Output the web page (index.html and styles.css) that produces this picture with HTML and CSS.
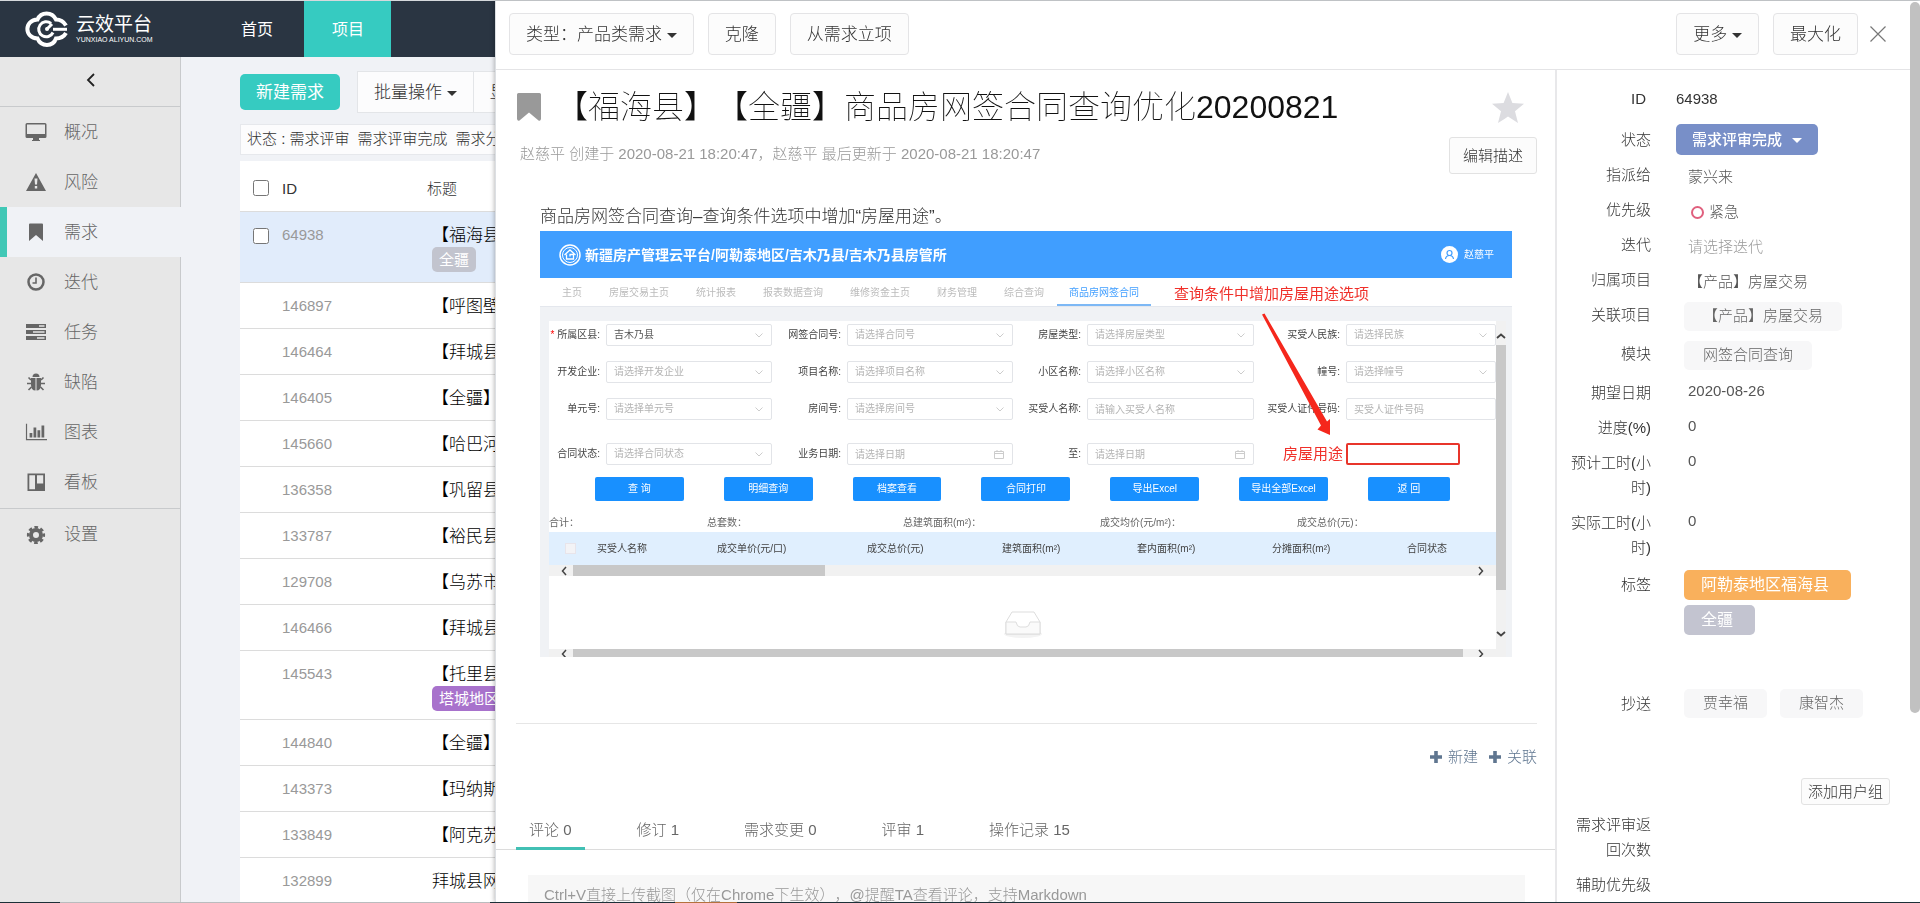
FILE: index.html
```html
<!DOCTYPE html>
<html lang="zh-CN">
<head>
<meta charset="utf-8">
<title>云效平台</title>
<link rel="stylesheet" href="styles.css">
</head>
<body>
<header class="topbar">
  <a class="logo" href="#">
    <svg class="logo-mark" viewBox="0 0 44 36" fill="none" stroke="#fff" stroke-width="4">
      <path d="M41 14.5C38 9.500 34 8.500 31 8.500C27 .5 16 .5 12.500 8.500C-1 9-1 27 12.500 27.500C16 36 28 36 31 27.500C36 27.500 39 25.500 41 22"/>
      <path d="M26 12.500A7.500 7.500 0 1 0 28 21.500" stroke-width="3"/>
      <path d="M22 18l5-5" stroke-width="3"/>
      <path d="M28 18.300h14" stroke-width="3"/>
      <circle cx="22" cy="18" r="2" fill="#fff" stroke="none"/>
    </svg>
    <span class="logo-text"><b>云效平台</b><small>YUNXIAO ALIYUN.COM</small></span>
  </a>
  <nav class="topnav"><a href="#">首页</a><a href="#" class="active">项目</a></nav>
</header>
<div class="shell">
  <aside class="sidebar">
    <button class="collapse" aria-label="收起"><svg width="10" height="14" viewBox="0 0 10 14" fill="none" stroke="#222" stroke-width="1.800"><path d="M8 1L2 7l6 6"/></svg></button>
    <a href="#"><svg viewBox="0 0 22 20"><path fill-rule="evenodd" d="M2 1h18a1.500 1.500 0 0 1 1.500 1.500v12A1.500 1.500 0 0 1 20 16h-6v2h1v1H7v-1h1v-2H2a1.500 1.500 0 0 1-1.500-1.500v-12A1.500 1.500 0 0 1 2 1zm0 1.500V12h18V2.500z"/></svg>概况</a>
    <a href="#"><svg viewBox="0 0 22 20"><path fill-rule="evenodd" d="M11 1l10 18H1zM9.500 6.500l.5 6h2l.5-6zM9.800 14v2.500h2.400V14z"/></svg>风险</a>
    <a href="#" class="active"><svg viewBox="0 0 22 20"><path d="M5 1.500h12q1 0 1 1V19l-7-6-7 6V2.500q0-1 1-1z"/></svg>需求</a>
    <a href="#"><svg viewBox="0 0 22 20" ><circle cx="11" cy="10" r="7.500" fill="none" stroke="#666" stroke-width="2.500"/><path d="M11 5.500V11H7.500" fill="none" stroke="#666" stroke-width="1.600"/></svg>迭代</a>
    <a href="#"><svg viewBox="0 0 22 20"><path fill-rule="evenodd" d="M1 2h20v4H1zm13 1.300v1.400h5.500V3.300zM1 8h20v4H1zm7 1.300v1.400h11.500V9.300zM1 14h20v4H1zm11 1.300v1.400h7.500v-1.400z"/></svg>任务</a>
    <a href="#"><svg viewBox="0 0 22 20"><path d="M7.500 5a3.500 3.500 0 0 1 7 0zM6 6h4.500v12.500C7.500 18.500 6 16.500 6 13zM16 6h-4.500v12.500c3 0 4.500-2 4.500-5.500z"/><path d="M6 8L3.500 5.500M6 11.500H2M6.500 15L3.500 18M16 8l2.500-2.500M16 11.500h4M15.500 15l3 3" fill="none" stroke="#666" stroke-width="1.600"/></svg>缺陷</a>
    <a href="#"><svg viewBox="0 0 24 20"><path d="M1 1h1.300v16.700H24V19H1zM5 11h3v5H5zM9.300 5h3v11h-3zM13.600 8h3v8h-3zM18 3h3v13h-3z"/></svg>图表</a>
    <a href="#"><svg viewBox="0 0 22 20"><path fill-rule="evenodd" d="M2.500 1.500h17.500v17.500H2.500zM4.300 3.300v14h5.700v-14zM12 3.300v8.200h6.200V3.300z"/></svg>看板</a>
    <a href="#" class="settings"><svg viewBox="0 0 22 20"><circle cx="11" cy="10" r="5" fill="none" stroke="#666" stroke-width="4"/><circle cx="11" cy="10" r="7.800" fill="none" stroke="#666" stroke-width="2.600" stroke-dasharray="3.600 2.526" stroke-dashoffset="1.800"/></svg>设置</a>
  </aside>
  <main class="list">
    <div class="list-tools">
      <button class="create">新建需求</button>
      <div class="group"><button>批量操作 <i class="caret"></i></button><button>显示设置</button></div>
    </div>
    <div class="filter"><span>状态 : 需求评审</span><span>需求评审完成</span><span>需求分析</span></div>
    <table class="reqs">
      <colgroup><col class="c-check"><col class="c-id"><col></colgroup>
      <thead><tr><th><input type="checkbox" aria-label="全选"></th><th>ID</th><th>标题</th></tr></thead>
      <tbody>
        <tr class="current"><td><input type="checkbox" aria-label="选择 64938"></td><td>64938</td><td>【福海县】<br><span class="label grey">全疆</span></td></tr>
        <tr><td></td><td>146897</td><td>【呼图壁县】</td></tr>
        <tr><td></td><td>146464</td><td>【拜城县】</td></tr>
        <tr><td></td><td>146405</td><td>【全疆】</td></tr>
        <tr><td></td><td>145660</td><td>【哈巴河县】</td></tr>
        <tr><td></td><td>136358</td><td>【巩留县】</td></tr>
        <tr><td></td><td>133787</td><td>【裕民县】</td></tr>
        <tr><td></td><td>129708</td><td>【乌苏市】</td></tr>
        <tr><td></td><td>146466</td><td>【拜城县】</td></tr>
        <tr><td></td><td>145543</td><td>【托里县】<br><span class="label purple">塔城地区</span></td></tr>
        <tr><td></td><td>144840</td><td>【全疆】</td></tr>
        <tr><td></td><td>143373</td><td>【玛纳斯县】</td></tr>
        <tr><td></td><td>133849</td><td>【阿克苏】</td></tr>
        <tr><td></td><td>132899</td><td>拜城县网签</td></tr>
      </tbody>
    </table>
  </main>
</div>

<section class="drawer">
  <div class="drawer-bar">
    <button>类型：产品类需求 <i class="caret"></i></button>
    <button>克隆</button>
    <button>从需求立项</button>
    <span class="spacer"></span>
    <button>更多 <i class="caret"></i></button>
    <button>最大化</button>
    <button class="close" aria-label="关闭"><svg width="16" height="16" viewBox="0 0 16 16" stroke="#777" stroke-width="1.200"><path d="M.5.5l15 15M15.500.5l-15 15"/></svg></button>
  </div>
  <div class="drawer-body">
    <div class="detail">
      <div class="title-row">
        <svg width="24" height="28" viewBox="0 0 24 28" fill="#999"><path d="M1.500 0h21Q24 0 24 1.500V26q-.5 2.500-2.500 1.500L12 19.500l-9.500 8Q.5 28.500 0 26V1.500Q0 0 1.500 0z"/></svg>
        <h1>【福海县】【全疆】商品房网签合同查询优化20200821</h1>
        <svg class="star" width="32" height="31" viewBox="0 0 32 31" fill="#dcdce0"><path d="M16 0l4.400 11 11.600.8-9 7.400 3 11.800-10-6.400L6 31l3-11.800-9-7.400 11.600-.8z"/></svg>
      </div>
      <div class="meta-row">
        <p>赵慈平 创建于 2020-08-21 18:20:47，赵慈平 最后更新于 2020-08-21 18:20:47</p>
        <button class="small-btn edit">编辑描述</button>
      </div>
      <div class="desc">
        <p>商品房网签合同查询–查询条件选项中增加“房屋用途”。</p>
        <figure class="shot">
          <div class="s-head">
            <svg width="22" height="22" viewBox="0 0 22 22" fill="none" stroke="#fff"><circle cx="11" cy="11" r="10" stroke-width="1.500"/><circle cx="11" cy="11" r="7.500"/><path d="M5.500 11L11 6l5.500 5M7.500 10.500V15h7v-4.500H11v2" stroke-width="1.300"/></svg>
            <strong>新疆房产管理云平台/阿勒泰地区/吉木乃县/吉木乃县房管所</strong>
            <svg width="17" height="17" viewBox="0 0 17 17"><circle cx="8.500" cy="8.500" r="8.500" fill="#fff"/><g fill="none" stroke="#409eff" stroke-width="1.200"><circle cx="8.500" cy="7" r="2.500"/><path d="M4.500 13q.5-3.500 4-3.500t4 3.500"/></g></svg>
            <span>赵慈平</span>
          </div>
          <div class="s-tabs"><span>主页</span><span>房屋交易主页</span><span>统计报表</span><span>报表数据查询</span><span>维修资金主页</span><span>财务管理</span><span>综合查询</span><span class="on">商品房网签合同</span><em>查询条件中增加房屋用途选项</em></div>
          <div class="s-body">
            <div class="s-panel">
              <div class="s-form">
                <label for="f1"><i>*</i> 所属区县:</label><select id="f1" class="filled"><option>吉木乃县</option></select>
                <label for="f2">网签合同号:</label><select id="f2"><option>请选择合同号</option></select>
                <label for="f3">房屋类型:</label><select id="f3"><option>请选择房屋类型</option></select>
                <label for="f4">买受人民族:</label><select id="f4"><option>请选择民族</option></select>
                <label for="f5">开发企业:</label><select id="f5"><option>请选择开发企业</option></select>
                <label for="f6">项目名称:</label><select id="f6"><option>请选择项目名称</option></select>
                <label for="f7">小区名称:</label><select id="f7"><option>请选择小区名称</option></select>
                <label for="f8">幢号:</label><select id="f8"><option>请选择幢号</option></select>
                <label for="f9">单元号:</label><select id="f9"><option>请选择单元号</option></select>
                <label for="f10">房间号:</label><select id="f10"><option>请选择房间号</option></select>
                <label for="f11">买受人名称:</label><input id="f11" placeholder="请输入买受人名称">
                <label for="f12">买受人证件号码:</label><input id="f12" placeholder="买受人证件号码">
                <label for="f13">合同状态:</label><select id="f13"><option>请选择合同状态</option></select>
                <label for="f14">业务日期:</label><input id="f14" class="date" placeholder="请选择日期">
                <label for="f15">至:</label><input id="f15" class="date" placeholder="请选择日期">
                <label for="f16" class="red">房屋用途</label><input id="f16" class="red">
              </div>
              <div class="s-btns"><button>查 询</button><button>明细查询</button><button>档案查看</button><button>合同打印</button><button>导出Excel</button><button>导出全部Excel</button><button>返 回</button></div>
              <div class="s-sum"><span>合计：</span><span>总套数：</span><span>总建筑面积(m²)：</span><span>成交均价(元/m²)：</span><span>成交总价(元)：</span></div>
              <table class="s-table">
                <colgroup><col class="w-check"><col class="w-name"><col class="w-unit"><col class="w-area"><col class="w-area"><col class="w-area"><col class="w-area"><col></colgroup>
                <tr><th><input type="checkbox" aria-label="全选合同"></th><th>买受人名称</th><th>成交单价(元/口)</th><th>成交总价(元)</th><th>建筑面积(m²)</th><th>套内面积(m²)</th><th>分摊面积(m²)</th><th>合同状态</th></tr>
              </table>
              <div class="s-hbar"><svg viewBox="0 0 6 10"><path d="M5 1L1.500 5 5 9"/></svg><div class="track"><div class="thumb short"></div></div><svg viewBox="0 0 6 10"><path d="M1 1l3.500 4L1 9"/></svg></div>
              <div class="s-empty"><svg width="38" height="28" viewBox="0 0 38 28"><ellipse cx="19" cy="24" rx="19" ry="4" fill="#f3f3f3"/><path d="M2 12L8 2h22l6 10v12H2z" fill="#fff" stroke="#ddd"/><path d="M2 12h10q1 5 4 5h6q3 0 4-5h10v12H2z" fill="#fafafa" stroke="#ddd"/></svg></div>
              <div class="s-hbar last"><svg viewBox="0 0 6 10"><path d="M5 1L1.500 5 5 9"/></svg><div class="track"><div class="thumb long"></div></div><svg viewBox="0 0 6 10"><path d="M1 1l3.500 4L1 9"/></svg></div>
            </div>
            <div class="s-vbar"><svg viewBox="0 0 10 6"><path d="M1 5l4-3.500L9 5"/></svg><div class="v-thumb"></div><svg viewBox="0 0 10 6"><path d="M1 1l4 3.500L9 1"/></svg></div>
          </div>
          <svg class="arrow" width="972" height="426" viewBox="0 0 972 426"><path d="M722 83.500L724.500 82.500 787 190.500 790 188V204L777.500 198.500 781 194.500z" fill="#f5271c"/></svg>
        </figure>
      </div>
      <div class="links">
        <a href="#"><svg viewBox="0 0 12 12"><path d="M4.200 0h3.600v4.200H12v3.600H7.800V12H4.200V7.800H0V4.200h4.200z"/></svg> 新建</a>
        <a href="#"><svg viewBox="0 0 12 12"><path d="M4.200 0h3.600v4.200H12v3.600H7.800V12H4.200V7.800H0V4.200h4.200z"/></svg>关联</a>
      </div>
      <nav class="tabs"><a href="#" class="active">评论 0</a><a href="#">修订 1</a><a href="#">需求变更 0</a><a href="#">评审 1</a><a href="#">操作记录 15</a></nav>
      <textarea class="comment" aria-label="评论" placeholder="Ctrl+V直接上传截图（仅在Chrome下生效），@提醒TA查看评论，支持Markdown"></textarea>
    </div>
    <aside class="props">
      <div class="field id"><span class="name">ID</span><span class="val">64938</span></div>
      <div class="field state"><span class="name">状态</span><button class="status">需求评审完成 <i class="caret"></i></button></div>
      <div class="field"><span class="name">指派给</span><span class="val in">蒙兴来</span></div>
      <div class="field"><span class="name">优先级</span><span class="val in"><i class="ring"></i>紧急</span></div>
      <div class="field"><span class="name">迭代</span><span class="val in hint">请选择迭代</span></div>
      <div class="field"><span class="name">归属项目</span><span class="val in">【产品】房屋交易</span></div>
      <div class="field"><span class="name">关联项目</span><span class="tags"><span class="chip">【产品】房屋交易</span></span></div>
      <div class="field"><span class="name">模块</span><span class="tags"><span class="chip">网签合同查询</span></span></div>
      <div class="field"><span class="name">期望日期</span><span class="val in num">2020-08-26</span></div>
      <div class="field"><span class="name">进度(%)</span><span class="val in num">0</span></div>
      <div class="field"><span class="name">预计工时(小时)</span><span class="val in num">0</span></div>
      <div class="field"><span class="name">实际工时(小时)</span><span class="val in num">0</span></div>
      <div class="field marks"><span class="name">标签</span><span class="tags"><span class="mark orange">阿勒泰地区福海县</span><span class="mark grey">全疆</span></span></div>
      <div class="field cc"><span class="name">抄送</span><span class="tags"><span class="chip">贾幸福</span><span class="chip">康智杰</span></span></div>
      <button class="small-btn add">添加用户组</button>
      <div class="field"><span class="name">需求评审返回次数</span></div>
      <div class="field"><span class="name">辅助优先级</span></div>
    </aside>
  </div>
  <div class="scrollbar"></div>
</section>
<div class="bottom-line"></div>
</body>
</html>
```

FILE: styles.css
```css
* { box-sizing: border-box; }
body {
  margin: 0;
  height: 100vh;
  overflow: hidden;
  display: flex;
  flex-direction: column;
  border-top: 1px solid #d5d9dc;
  background: #f0f2f6;
  color: #333;
  font: 300 15px/25px "Liberation Sans", "Noto Sans CJK SC", sans-serif;
  text-spacing-trim: space-all;
}
a { color: inherit; text-decoration: none; }
button, input, select, textarea { font: inherit; color: inherit; margin: 0; }
h1, p, figure { margin: 0; }
i, em { font-style: normal; }
.caret {
  display: inline-block;
  border: 5px solid transparent;
  border-top-color: currentColor;
  border-bottom: 0;
  vertical-align: 2px;
}

/* top bar */
.topbar { display: flex; flex: none; height: 56px; background: #2a3542; color: #fff; }
.logo { display: flex; align-items: center; width: 213px; padding-left: 25px; }
.logo-mark { width: 44px; height: 36px; }
.logo-text { display: flex; flex-direction: column; padding-left: 7px; }
.logo-text b { font-size: 19px; line-height: 22px; font-weight: 400; }
.logo-text small { font-size: 7px; line-height: 8px; font-weight: 400; white-space: nowrap; }
.topnav { display: flex; gap: 4px; }
.topnav a { padding: 1px 27px 0 28px; font-size: 16px; line-height: 55px; font-weight: 400; }
.topnav .active { background: #36cbc1; }

/* side bar */
.shell { display: flex; flex: 1; min-height: 0; }
.sidebar {
  display: flex;
  flex-direction: column;
  flex: none;
  width: 181px;
  background: linear-gradient(#c8cacc, #c8cacc) right / 1px 100% no-repeat #e7e7e7;
}
.collapse { flex: none; height: 50px; border: 0; border-bottom: 1px solid #c8cacc; background: none; padding: 0; }
.sidebar a {
  display: flex;
  align-items: center;
  gap: 17px;
  flex: none;
  height: 50px;
  padding-left: 25px;
  font-size: 17px;
  color: #666;
}
.sidebar a svg { width: 22px; height: 20px; fill: #666; }
.sidebar .active { background: #f0f2f6; border-left: 7px solid #41c8b6; padding-left: 18px; }
.sidebar .settings { margin-top: 1px; border-top: 1px solid #c8cacc; height: 52px; }

/* requirement list */
.list { flex: 1; min-width: 0; padding: 14px 0 0 59px; overflow: hidden; }
.list-tools { display: flex; align-items: center; gap: 17px; }
.create { width: 100px; height: 36px; border: 0; border-radius: 5px; background: #36cbc1; color: #fff; font-size: 17px; font-weight: 400; padding: 0; }
.group { display: flex; }
.group button { height: 42px; padding: 0 16px; border: 1px solid #e3e5e8; background: #fcfcfd; font-size: 17px; }
.group button + button { border-left: 0; }
.filter { display: flex; gap: 8px; margin: 11px 0 6px; height: 31px; padding-left: 6px; background: #fcfcfd; border: 1px solid #e6e8ec; line-height: 28px; white-space: nowrap; }
.reqs { width: 100%; table-layout: fixed; border-collapse: collapse; background: #fff; white-space: nowrap; }
.c-check { width: 42px; }
.c-id { width: 145px; }
.reqs th { height: 50px; padding: 5px 0 0; text-align: left; font-weight: 300; }
.reqs td { padding: 10px 0; vertical-align: top; border-top: 1px solid #dcdcdc; color: #999; }
.reqs td:last-child { padding: 13px 0 8px 5px; font-size: 17px; line-height: 22px; color: #000; }
.reqs .current td { background: #e1ecfb; }
.reqs .current td:last-child { padding-bottom: 10px; }
.reqs input { display: block; width: 16px; height: 16px; margin: 0 0 0 13px; }
.reqs td input { margin-top: 6px; }
.label { display: inline-block; height: 25px; padding: 0 7px; border-radius: 5px; color: #fff; font-size: 15px; line-height: 25px; font-weight: 400; }
.label.grey { background: #c2c4ce; }
.label.purple { background: #a872cc; }

/* drawer */
.drawer {
  position: fixed;
  top: 1px;
  right: 0;
  bottom: 1px;
  left: 495px;
  display: flex;
  flex-direction: column;
  background: #fff;
  border-left: 1px solid #dcdfe3;
  box-shadow: -1px 0 4px rgba(0, 0, 0, .25);
}
.drawer-bar { display: flex; align-items: center; gap: 14px; flex: none; height: 69px; padding: 0 34px 2px 13px; border-bottom: 1px solid #e4e4e6; }
.drawer-bar button { height: 42px; padding: 0 16px; border: 1px solid #e4e4e6; border-radius: 4px; background: #fcfcfc; font-size: 17px; white-space: nowrap; }
.drawer-bar .spacer { flex: 1; }
.drawer-bar .close { width: 16px; height: 16px; padding: 0; border: 0; background: none; margin-left: -2px; }
.close svg { display: block; }
.drawer-body { display: flex; flex: 1; min-height: 0; overflow: hidden; }
.detail { flex: 1; min-width: 0; padding-top: 17px; }
.title-row { display: flex; align-items: center; height: 40px; padding: 0 31px 0 21px; }
.title-row h1 { flex: 1; padding-left: 15px; font-size: 32px; line-height: 40px; font-weight: 100; color: #111; white-space: nowrap; }
.meta-row { display: flex; align-items: center; justify-content: space-between; margin-top: 10px; padding: 0 18px 0 24px; color: #999; }
.meta-row p { padding-bottom: 4px; }
.small-btn { border: 1px solid #e2e2e2; border-radius: 3px; background: #fcfcfc; color: #333; }
.edit { height: 37px; padding: 0 13px; }
.desc { margin: 28px 18px 0 20px; padding: 0 25px 66px 24px; border-bottom: 1px solid #e6e6e6; font-size: 17px; line-height: 29px; }

/* attached picture */
.shot { position: relative; height: 426px; overflow: hidden; display: flex; flex-direction: column; font-size: 10px; line-height: 14px; background: #f0f2f5; font-weight: 400; }
.s-head { display: flex; align-items: center; flex: none; height: 47px; padding: 0 18px 0 19px; background: #409eff; color: #fff; }
.s-head strong { flex: 1; padding-left: 4px; font-size: 14px; }
.s-head span { padding-left: 6px; }
.s-tabs { display: flex; flex: none; height: 29px; padding-left: 8px; background: #fff; border-bottom: 1px solid #e4e7ed; color: #bbb; line-height: 30px; white-space: nowrap; }
.s-tabs span { padding: 0 13px 0 14px; }
.s-tabs .on { padding: 0 12px; color: #409eff; border-bottom: 2px solid #7db8f5; }
.s-tabs em { padding-left: 23px; font-size: 15px; line-height: 32px; color: #f0302a; }
.s-body { display: flex; flex: 1; min-height: 0; padding: 14px 6px 0 9px; }
.s-panel { flex: 1; min-width: 0; display: flex; flex-direction: column; background: #fff; }
.s-form { display: grid; grid-template-columns: 57px 166px 75px 166px 74px 167px 92px 1fr; grid-template-rows: 22px 22px 22px 22px; row-gap: 15px; padding: 3px 0 0; align-items: center; }
.s-form label { padding-right: 6px; text-align: right; white-space: nowrap; color: #444; }
.s-form label i { color: #f00; }
.s-form select, .s-form input { width: 100%; height: 22px; padding: 0 7px; border: 1px solid #e2e4e8; border-radius: 2px; color: #b4b4b4; appearance: none; background: #fff; min-width: 0; }
.s-form input::placeholder { color: #b4b4b4; }
.s-form select { background: url("data:image/svg+xml,%3Csvg xmlns='http://www.w3.org/2000/svg' width='8' height='5' fill='none' stroke='%23ccc'%3E%3Cpath d='M.5.5L4 4 7.500.5'/%3E%3C/svg%3E") right 8px center no-repeat #fff; }
.s-form .date { background: url("data:image/svg+xml,%3Csvg xmlns='http://www.w3.org/2000/svg' width='10' height='9' fill='none' stroke='%23ccc'%3E%3Cpath d='M.5 1.500h9v7h-9zM.5 3.500h9M3 0v2M7 0v2'/%3E%3C/svg%3E") right 8px center no-repeat #fff; }
.s-form .filled { color: #555; }
.s-form > :nth-child(n+25) { margin-top: 16px; }
.s-form label.red { color: #f0302a; font-size: 15px; line-height: 22px; padding-right: 3px; }
.s-form input.red { width: 114px; border: 2px solid #e8352b; }
.s-btns { display: flex; gap: 40px; padding: 20px 46px 0; }
.s-btns button { flex: 1; height: 24px; border: 0; border-radius: 2px; background: #1890ff; color: #fff; padding: 0; white-space: nowrap; }
.s-btns button:last-child { flex: 0 0 82px; }
.s-sum { display: grid; grid-template-columns: 158px 196px 197px 197px 1fr; padding-top: 13px; line-height: 17px; color: #666; white-space: nowrap; }
.s-table { flex: none; width: 100%; height: 33px; margin-top: 1px; table-layout: fixed; border-collapse: collapse; background: #e0effe; color: #444; }
.s-table th { padding: 0; font-weight: 400; text-align: left; white-space: nowrap; }
.w-check { width: 48px; }
.w-name { width: 120px; }
.w-unit { width: 150px; }
.w-area { width: 135px; }
.s-table input { display: block; width: 11px; height: 11px; margin: 0 0 0 16px; appearance: none; background: #f3f3f6; border: 1px solid #e8e4ea; }
.s-hbar { display: flex; align-items: center; gap: 6px; flex: none; height: 11px; padding: 0 12px; background: #f1f1f1; }
.s-hbar svg { width: 6px; height: 10px; fill: none; stroke: #444; stroke-width: 1.500; }
.track { flex: 1; height: 11px; }
.thumb { height: 11px; background: #c8c8c8; }
.short { width: 28%; }
.long { width: 99%; }
.s-empty { display: flex; align-items: center; justify-content: center; flex: 1; padding-top: 22px; }
.last { height: 8px; overflow: hidden; align-items: flex-start; }
.s-vbar { display: flex; flex-direction: column; align-items: center; width: 10px; padding: 12px 0 20px; background: #f1f1f1; }
.s-vbar svg { width: 10px; height: 6px; fill: none; stroke: #444; stroke-width: 1.800; }
.v-thumb { width: 10px; height: 245px; margin: 6px 0 auto; background: #c8c8c8; }
.arrow { position: absolute; top: 0; left: 0; }

/* links, tabs, comment */
.links { display: flex; justify-content: flex-end; gap: 11px; padding: 22px 18px 0; color: #5f7690; line-height: 22px; }
.links a { display: flex; align-items: center; gap: 6px; }
.links svg { width: 12px; height: 12px; fill: #5f7690; }
.tabs { display: flex; gap: 39px; margin-top: 51px; padding-left: 20px; border-bottom: 1px solid #dcdcdc; line-height: 22px; color: #666; }
.tabs a { padding: 0 13px 6px; border-bottom: 3px solid transparent; margin-bottom: -1px; }
.tabs .active { border-color: #41c0b4; }
.comment { display: block; width: calc(100% - 62px); height: 90px; margin: 25px 0 0 32px; padding: 7px 16px; border: 0; background: #f7f7f7; resize: none; overflow: hidden; line-height: 25px; }
.comment::placeholder { color: #999; }

/* properties */
.props { flex: none; width: 365px; padding: 16px 0 0 10px; border-left: 2px solid #e8e8ea; display: flex; flex-direction: column; }
.field { display: flex; align-items: flex-start; gap: 33px; flex: none; margin-bottom: 10px; }
.name { flex: none; width: 84px; text-align: right; word-break: break-all; }
.val { white-space: nowrap; margin-left: -8px; }
.field.id { margin-bottom: 13px; }
.field.id .name { padding-right: 5px; }
.val.in { margin-left: 4px; padding-top: 2px; margin-bottom: -2px; color: #555; }
.val.hint { color: #999; }
.val.num { padding-top: 0; margin-bottom: 0; line-height: 22px; }
.state { align-items: center; margin-bottom: 7px; }
.status { height: 31px; margin-left: -8px; padding: 0 16px; border: 0; border-radius: 5px; background: #788fc8; color: #fff; font-weight: 500; white-space: nowrap; }
.status .caret { margin-left: 6px; }
.ring { display: inline-block; width: 13px; height: 13px; margin: 0 5px 0 3px; border: 2px solid #e0607e; border-radius: 50%; vertical-align: -2px; }
.tags { display: flex; flex-wrap: wrap; gap: 5px 13px; }
.chip { height: 29px; padding: 0 19px; border-radius: 5px; background: #f7f7f8; color: #666; line-height: 27px; white-space: nowrap; }
.marks .name, .cc .name { line-height: 29px; }
.marks .tags { flex-direction: column; align-items: flex-start; }
.marks { margin-bottom: 54px; }
.mark { height: 30px; padding: 0 22px 0 17px; border-radius: 5px; color: #fff; font-size: 16px; line-height: 29px; font-weight: 400; }
.mark.orange { background: #f9b05c; }
.mark.grey { background: #c3c4d0; }
.cc { margin-bottom: 60px; }
.add { align-self: flex-end; flex: none; height: 27px; margin: 0 30px 7px 0; padding: 0 6px; line-height: 24px; }
.scrollbar { position: absolute; top: 1px; right: 0; width: 10px; height: 711px; border-radius: 5px; background: #c1c1c1; }
.bottom-line { position: fixed; right: 0; bottom: 0; left: 0; height: 1px; background: linear-gradient(90deg, #1c3038 60px, #b9bcbe 60px 490px, #1c3038 490px 675px, #b5713c 675px 737px, #1c3038 737px); }
```
